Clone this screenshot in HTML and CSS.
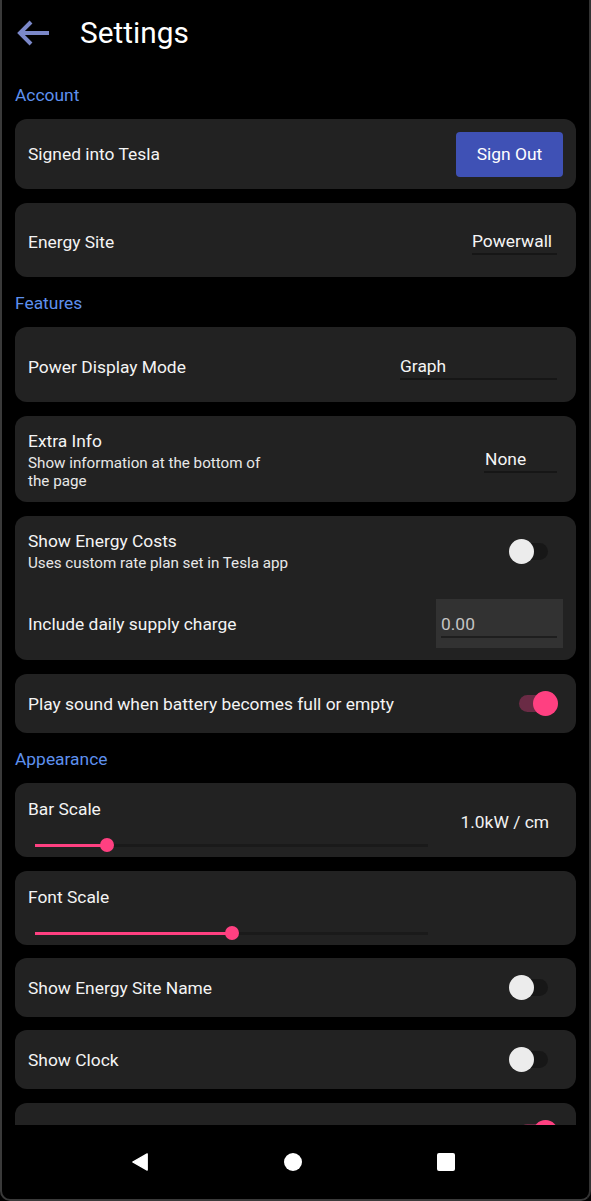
FILE: index.html
```html
<!DOCTYPE html>
<html>
<head>
<meta charset="utf-8">
<link rel="stylesheet" href="styles.css">
</head>
<body>
<div class="frame">
  <div class="screen">
    <div class="header">
      <svg class="back" width="34" height="26" viewBox="0 0 34 26">
        <path d="M3 13 H32 M14 2 L3 13 L14 24" fill="none" stroke="#7b88c9" stroke-width="4" stroke-linejoin="miter"/>
      </svg>
      <div class="title">Settings</div>
    </div>

    <div class="section">Account</div>
    <div class="card row h70">
      <div class="label">Signed into Tesla</div>
      <div class="btn">Sign Out</div>
    </div>
    <div class="card row h74 pt4">
      <div class="label">Energy Site</div>
      <div class="select w85">Powerwall</div>
    </div>

    <div class="section">Features</div>
    <div class="card row h75 pt4">
      <div class="label">Power Display Mode</div>
      <div class="select w157">Graph</div>
    </div>
    <div class="card row extra">
      <div class="textcol narrow">
        <div class="label">Extra Info</div>
        <div class="sub">Show information at the bottom of the page</div>
      </div>
      <div class="select w73">None</div>
    </div>
    <div class="card costs">
      <div class="row">
        <div class="textcol">
          <div class="label">Show Energy Costs</div>
          <div class="sub">Uses custom rate plan set in Tesla app</div>
        </div>
        <div class="switch off"><div class="track"></div><div class="thumb"></div></div>
      </div>
      <div class="row supply">
        <div class="label">Include daily supply charge</div>
        <div class="input"><div class="field">0.00</div></div>
      </div>
    </div>
    <div class="card row h59">
      <div class="label">Play sound when battery becomes full or empty</div>
      <div class="switch on"><div class="track"></div><div class="thumb"></div></div>
    </div>

    <div class="section">Appearance</div>
    <div class="card row scale">
      <div class="slidecol">
        <div class="label">Bar Scale</div>
        <div class="slider"><div class="rail"></div><div class="fill" style="width:18.3%"></div><div class="knob" style="left:18.3%"></div></div>
      </div>
      <div class="value">1.0kW / cm</div>
    </div>
    <div class="card row scale g13">
      <div class="slidecol">
        <div class="label">Font Scale</div>
        <div class="slider"><div class="rail"></div><div class="fill" style="width:50%"></div><div class="knob" style="left:50%"></div></div>
      </div>
    </div>
    <div class="card row h59 g13">
      <div class="label">Show Energy Site Name</div>
      <div class="switch off"><div class="track"></div><div class="thumb"></div></div>
    </div>
    <div class="card row h59">
      <div class="label">Show Clock</div>
      <div class="switch off"><div class="track"></div><div class="thumb"></div></div>
    </div>
    <div class="card row h59 last">
      <div class="label"></div>
      <div class="switch on"><div class="track"></div><div class="thumb"></div></div>
    </div>
  </div>
  <div class="nav">
    <svg class="navicon" width="18" height="20" viewBox="0 0 18 20"><path d="M17 1 L17 19 L1 10 Z" fill="#fff" stroke="#fff" stroke-width="1.5" stroke-linejoin="round"/></svg>
    <div class="navicon circle"></div>
    <div class="navicon square"></div>
  </div>
</div>
</body>
</html>
```

FILE: styles.css
```css
* { box-sizing: border-box; }
html, body { margin: 0; padding: 0; background: #000; }
body {
  font-family: Roboto, "Noto Sans", "Liberation Sans", sans-serif;
  color: #f2f2f2;
  width: 591px;
  height: 1201px;
  overflow: hidden;
}
.frame {
  width: 591px;
  height: 1201px;
  border-left: 2px solid #3a3a3a;
  border-right: 2px solid #333;
  border-bottom: 2px solid #3a3a3a;
  border-bottom-left-radius: 10px;
  border-bottom-right-radius: 10px;
  display: flex;
  flex-direction: column;
  overflow: hidden;
  background: #000;
}
.screen {
  height: 1125px;
  overflow: hidden;
  padding: 0 13px;
  flex: none;
}
.header {
  height: 66px;
  margin-bottom: 17px;
  display: flex;
  align-items: center;
  padding-left: 2px;
}
.back { flex: none; }
.title {
  margin-left: 29px;
  font-size: 29.8px;
  color: #fff;
  line-height: 34px;
}
.section {
  font-size: 17.4px;
  line-height: 24px;
  color: #5e90ee;
  margin-bottom: 12px;
}
.card {
  background: #222;
  border-radius: 12px;
  margin-bottom: 14px;
  padding: 0 13px;
}
.card.g13 { margin-bottom: 13px; }
.row {
  display: flex;
  align-items: center;
  justify-content: space-between;
}
.h59 { height: 59px; }
.h70 { height: 70px; }
.h74 { height: 74px; }
.h75 { height: 75px; }
.pt4 { padding-top: 4px; }
.label {
  font-size: 17.4px;
  line-height: 22px;
  color: #f4f4f4;
}
.sub {
  font-size: 15.2px;
  line-height: 18px;
  margin-top: 2px;
  color: #e8e8e8;
}
.textcol.narrow { width: 250px; }
.btn {
  width: 107px;
  height: 45px;
  background: #3f51b5;
  border-radius: 4px;
  color: #fff;
  font-size: 17.4px;
  display: flex;
  align-items: center;
  justify-content: center;
}
.select {
  font-size: 17.4px;
  line-height: 24px;
  color: #f5f5f5;
  border-bottom: 2px solid #161616;
  margin-right: 6px;
}
.w85 { width: 85px; }
.w157 { width: 157px; }
.w73 { width: 73px; padding-left: 1px; }
.extra {
  height: 86px;
  padding-top: 2px;
}
.costs {
  height: 144px;
  padding-top: 14px;
  padding-bottom: 12px;
}
.supply { margin-top: 27px; }
.input {
  width: 127px;
  height: 49px;
  background: #323232;
  padding: 13px 6px 0 5px;
}
.field {
  font-size: 17.4px;
  line-height: 24px;
  color: #c4c4c4;
  border-bottom: 2px solid #1e1e1e;
}
.switch {
  position: relative;
  width: 40px;
  height: 25px;
  flex: none;
}
.switch.off { margin-right: 14px; }
.switch.on { margin-right: 5px; }
.track {
  position: absolute;
  left: 1px;
  right: 1px;
  top: 4px;
  height: 17px;
  border-radius: 9px;
}
.thumb {
  position: absolute;
  top: 0;
  width: 25px;
  height: 25px;
  border-radius: 50%;
}
.off .track { background: #171717; }
.off .thumb { left: 0; background: #ececec; }
.on .track { background: #6a2b45; }
.on .thumb { right: 0; background: #ff4081; }
.scale {
  height: 74px;
  align-items: stretch;
}
.slidecol {
  padding-top: 15px;
  width: 415px;
}
.slider {
  position: relative;
  margin-left: 7px;
  margin-top: 15px;
  width: 393px;
  height: 20px;
}
.rail, .fill {
  position: absolute;
  left: 0;
  top: 9px;
  height: 3px;
}
.rail { width: 100%; background: #1a1a1a; }
.fill { background: #ff4081; }
.knob {
  position: absolute;
  top: 3px;
  width: 14px;
  height: 14px;
  margin-left: -7px;
  border-radius: 50%;
  background: #ff4081;
}
.value {
  align-self: center;
  font-size: 17.4px;
  color: #f2f2f2;
  margin-right: 14px;
  padding-top: 4px;
}
.nav {
  flex: 1;
  display: flex;
  align-items: center;
  padding-left: 129px;
  gap: 135px;
}
.navicon { flex: none; width: 18px; height: 18px; }
.circle { border-radius: 50%; background: #fff; }
.square { border-radius: 2px; background: #fff; }
```
